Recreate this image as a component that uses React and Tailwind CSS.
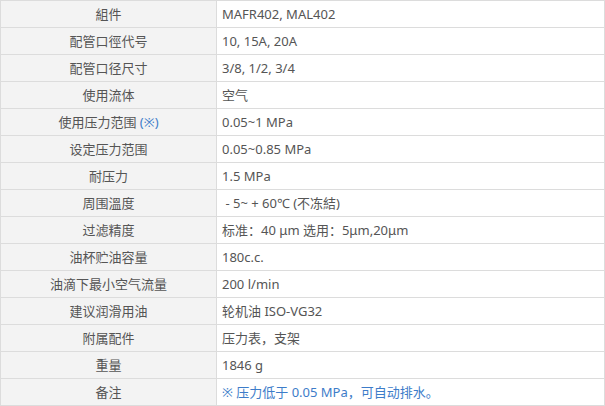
const rows = [
  ['組件', 'MAFR402, MAL402'],
  ['配管口徑代号', '10, 15A, 20A'],
  ['配管口径尺寸', '3/8, 1/2, 3/4'],
  ['使用流体', '空气'],
  ['使用压力范围', '0.05~1 MPa', true],
  ['设定压力范围', '0.05~0.85 MPa'],
  ['耐压力', '1.5 MPa'],
  ['周围溫度', ' - 5~ + 60℃ (不冻結)'],
  ['过滤精度', '标准：40 μm 选用：5μm,20μm'],
  ['油杯贮油容量', '180c.c.'],
  ['油滴下最小空气流量', '200 l/min'],
  ['建议润滑用油', '轮机油 ISO-VG32'],
  ['附属配件', '压力表，支架'],
  ['重量', '1846 g'],
];

export default function App() {
  return (
    <div className="w-[605px] h-[406px] bg-white font-['Noto_Sans','Noto_Sans_CJK_SC',sans-serif] text-[13px] text-[#555]">
      <table className="w-full border-collapse">
        <tbody>
          {rows.map(([label, value, mark]) => (
            <tr key={label} className="h-[27px]">
              <td className="w-[216px] border border-[#dcdcdc] bg-[#f3f3f3] p-0 text-center leading-[26px]">
                {label}
                {mark && <span className="text-[#3d7cc9]"> (※)</span>}
              </td>
              <td className="border border-[#dcdcdc] py-0 pl-[5px] leading-[26px] whitespace-pre">{value}</td>
            </tr>
          ))}
          <tr className="h-[27px]">
            <td className="w-[216px] border border-[#dcdcdc] bg-[#f3f3f3] p-0 text-center leading-[26px]">备注</td>
            <td className="border border-[#dcdcdc] py-0 pl-[5px] leading-[26px] text-[#3d7cc9]">※ 压力低于 0.05 MPa，可自动排水。</td>
          </tr>
        </tbody>
      </table>
    </div>
  );
}
